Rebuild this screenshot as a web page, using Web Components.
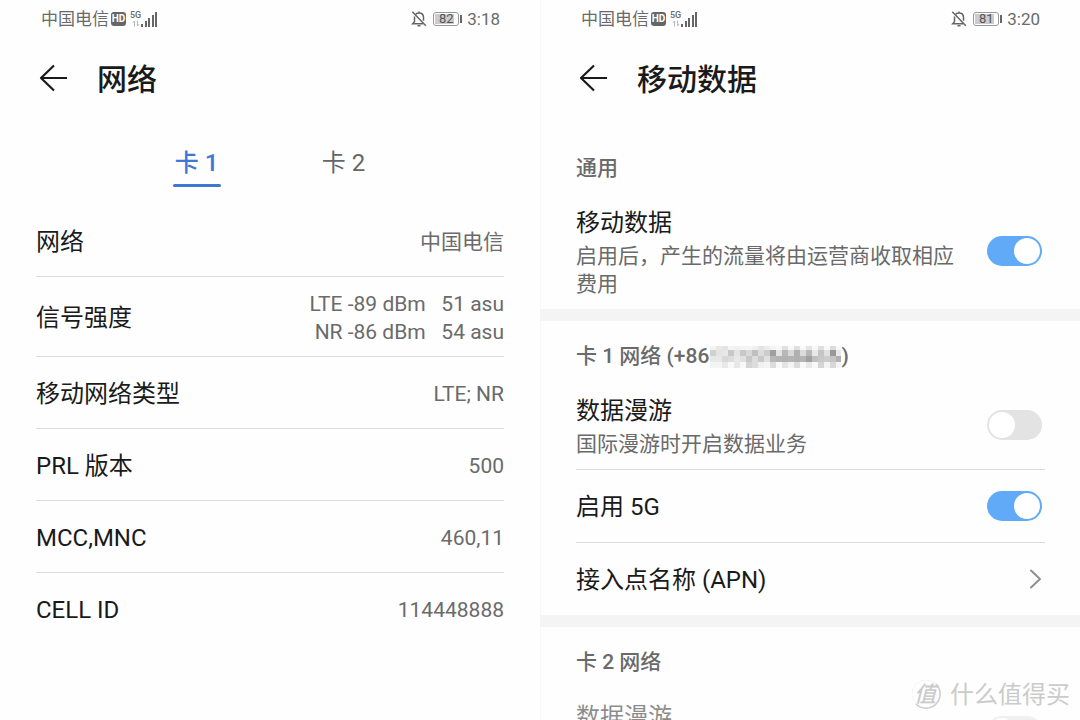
<!DOCTYPE html>
<html lang="zh-CN">
<head>
<meta charset="utf-8">
<title>网络设置</title>
<style>
  html, body { margin: 0; background: #fefefe; }
  body {
    font-family: Roboto, "Noto Sans CJK SC", sans-serif;
    color: #1a1a1a;
  }
</style>
</head>
<body>
<settings-board>
  <phone-screen>
    <status-bar slot="top" battery="82" time="3:18"></status-bar>
    <page-header slot="top">网络</page-header>
    <sim-tabs></sim-tabs>
    <info-list>
      <info-row label="网络">中国电信</info-row>
      <info-row label="信号强度" tall>LTE -89 dBm &nbsp; 51 asu<br>NR -86 dBm &nbsp; 54 asu</info-row>
      <info-row label="移动网络类型">LTE; NR</info-row>
      <info-row label="PRL 版本">500</info-row>
      <info-row label="MCC,MNC">460,11</info-row>
      <info-row label="CELL ID" last>114448888</info-row>
    </info-list>
  </phone-screen>
  <phone-screen class="second">
    <status-bar slot="top" battery="81" time="3:20"></status-bar>
    <page-header slot="top">移动数据</page-header>
    <setting-group class="first">
      <span slot="title">通用</span>
      <switch-row label="移动数据" note="启用后，产生的流量将由运营商收取相应费用" checked last></switch-row>
    </setting-group>
    <setting-group>
      <span slot="title">卡 1 网络 (+86<masked-number></masked-number>)</span>
      <switch-row label="数据漫游" note="国际漫游时开启数据业务"></switch-row>
      <switch-row label="启用 5G" checked></switch-row>
      <link-row>接入点名称 (APN)</link-row>
    </setting-group>
    <setting-group>
      <span slot="title">卡 2 网络</span>
      <switch-row label="数据漫游" note="国际漫游时开启数据业务" disabled></switch-row>
    </setting-group>
  </phone-screen>
  <brand-mark slot="mark"></brand-mark>
</settings-board>

<script>
const define = (name, render) => customElements.define(name, class extends HTMLElement {
  connectedCallback() {
    if (this.shadowRoot) return;
    this.attachShadow({ mode: 'open' }).innerHTML = render(this);
  }
});

define('settings-board', () => `
  <style>
    :host { display: block; position: relative; height: 100vh; overflow: hidden; }
    main { display: grid; grid-template-columns: 1fr 1fr; height: 100%; }
  </style>
  <main><slot></slot></main>
  <slot name="mark"></slot>`);

define('phone-screen', () => `
  <style>
    :host { display: block; min-width: 0; overflow-y: auto; scrollbar-width: none; }
    :host(.second) { box-shadow: inset 1px 0 #f7f7f7; }
  </style>
  <section><slot name="top"></slot><slot></slot></section>`);

define('status-bar', el => `
  <style>
    :host {
      display: flex; justify-content: space-between; align-items: center;
      box-sizing: border-box; height: 36px; padding: 1px 40px 0 41px;
      font-size: 17px; line-height: 20px; color: #6a6a6a;
    }
    div { display: flex; align-items: center; }
    svg { display: block; }
    .hd {
      width: 15px; height: 14px; margin-left: 2px; border-radius: 3px;
      background: #666; color: #fff; font-size: 10px; line-height: 14px; font-weight: 700; text-align: center;
    }
    .net { display: grid; justify-items: center; margin-left: 4px; font-size: 9px; line-height: 9px; font-weight: 500; }
    .bell { margin-right: 6px; }
    .level {
      box-sizing: border-box; width: 26px; height: 14px; padding: 1px;
      border: 1px solid #999; border-radius: 3px;
      font-size: 13px; line-height: 10px; text-align: center; color: #555;
      background: linear-gradient(#ccc, #ccc) 1px 1px / 19px 10px no-repeat;
    }
    .cap { width: 2px; height: 8px; margin: 0 5px 0 1px; background: #666; }
  </style>
  <div>
    <span>中国电信</span><span class="hd">HD</span>
    <span class="net">5G
      <svg width="8" height="7" viewBox="0 0 8 7" fill="none" stroke="#bbb"><path d="M2.5 6.5V1L.8 3M5.5.5V6L7.2 4"/></svg>
    </span>
    <svg width="17" height="16" viewBox="0 0 17 16" fill="#666"><path d="M0 13h2v3H0zM4 10h2v6H4zM7 7h2v9H7zM11 4h2v12h-2zM14 1h2v15h-2z"/></svg>
  </div>
  <div>
    <svg class="bell" width="16" height="16" viewBox="0 0 16 16" fill="none" stroke="#666" stroke-width="1.5">
      <path d="M4.8 3.1C5.6 2.3 6.7 1.9 8 1.9c2.900 0 4.500 2 4.500 4.700v3.200M3.500 5.500v5.200L1.700 12.800H12M1.300.8l13.500 14M8 .5v1.500M6.500 14.800h3"/>
    </svg>
    <span class="level">${el.getAttribute('battery')}</span><i class="cap"></i>
    <time>${el.getAttribute('time')}</time>
  </div>`);

define('page-header', () => `
  <style>
    :host { display: flex; align-items: center; height: 86px; padding: 0 36px; }
    button { display: block; padding: 0; margin: 0 27px 0 2px; border: 0; background: none; color: #1a1a1a; }
    svg { display: block; }
    h1 { margin: 0; padding-top: 2px; font-size: 30px; line-height: 40px; font-weight: 500; }
  </style>
  <button type="button" aria-label="返回">
    <svg width="32" height="30" viewBox="0 0 32 30" fill="none" stroke="currentColor" stroke-width="2.200" stroke-linejoin="round"><path d="M29 14H3M16 1.500L3 14l13 12.500"/></svg>
  </button>
  <h1><slot></slot></h1>`);

define('sim-tabs', () => `
  <style>
    :host { display: flex; justify-content: center; gap: 99px; margin: 25px 0 18px; }
    button {
      position: relative; min-width: 48px; padding: 0 0 8px; border: 0; background: none;
      font: inherit; font-size: 24px; line-height: 32px; color: #666; white-space: nowrap;
    }
    button[aria-selected=true] { color: #3f77d4; font-weight: 500; }
    button[aria-selected=true]::after {
      content: ""; position: absolute; left: 0; right: 0; bottom: 0; height: 3px; border-radius: 2px; background: #3f77d4;
    }
  </style>
  <button type="button" role="tab" aria-selected="true">卡 1</button>
  <button type="button" role="tab" aria-selected="false">卡 2</button>`);

define('info-list', () => `
  <style>:host { display: block; padding: 0 36px; }</style>
  <slot></slot>`);

define('info-row', el => `
  <style>
    :host {
      display: flex; justify-content: space-between; align-items: center;
      box-sizing: border-box; min-height: 72px; padding-top: 2px; border-bottom: 1px solid #dcdcdc;
    }
    :host([tall]) { min-height: 80px; }
    :host([last]) { border-bottom-color: transparent; }
    .label { font-size: 24px; line-height: 32px; }
    .value { font-size: 21px; line-height: 28px; color: #6a6a6a; text-align: right; }
  </style>
  <span class="label">${el.getAttribute('label')}</span>
  <span class="value"><slot></slot></span>`);

define('setting-group', () => `
  <style>
    :host { display: block; border-top: 12px solid #f4f4f4; }
    :host(.first) { border-top-color: transparent; margin-top: -1px; }
    h2 { display: flex; margin: 0; padding: 21px 36px 13px; font-size: 21px; line-height: 28px; font-weight: 500; color: #6a6a6a; }
    .rows { padding: 0 35px 0 36px; }
  </style>
  <h2><slot name="title"></slot></h2>
  <div class="rows"><slot></slot></div>`);

define('masked-number', () => {
  const rows = [
    [0, 4, 'f4 e8 e4 f4 f0 f4 f4 f0 e4 ec f4 f8 e0 f8 e0 f8 e4 f8 e0 f8 dc f8'],
    [4, 6, 'd0 e4 e8 c8 e4 c8 d8 c0 dc cc a0 e4 b8 d8 b0 dc b8 e8 c4 e0 98 e8'],
    [10, 6, 'e8 e8 d8 dc e8 e0 c8 dc c8 e0 b8 b4 b0 b4 b0 b4 a0 c0 c8 cc c4 b0'],
    [16, 6, 'f4 f4 e8 f8 e8 f8 d4 dc f0 f4 dc f8 e4 f4 dc f8 e8 f8 d4 f4 d8 f4']
  ];
  const cells = rows.map(([y, h, tones]) => tones.split(' ')
    .map((t, i) => `<rect x="${i * 6}" y="${y}" width="6" height="${h}" fill="#${t}${t}${t}"/>`).join('')).join('');
  return `
  <style>:host { display: inline-block; vertical-align: middle; margin-left: 1px; } svg { display: block; }</style>
  <svg width="131" height="22" viewBox="0 0 131 22" shape-rendering="crispEdges" role="img" aria-label="号码已隐藏">${cells}</svg>`;
});

define('switch-row', el => {
  const has = name => el.hasAttribute(name) ? name : '';
  const note = el.getAttribute('note');
  return `
  <style>
    :host { display: block; border-bottom: 1px solid #dcdcdc; }
    :host([last]) { border-bottom: 0; }
    label { display: flex; align-items: center; justify-content: space-between; gap: 20px; min-height: 72px; }
    label.noted { padding: 12px 0 11px; min-height: 0; }
    .text { display: grid; gap: 3px; padding-top: 2px; }
    .noted .text { padding-top: 0; }
    .name { font-size: 24px; line-height: 32px; }
    .note { max-width: 384px; font-size: 21px; line-height: 28px; color: #6a6a6a; }
    :host([disabled]) .text { opacity: .5; }
    input {
      appearance: none; flex: none; box-sizing: border-box; width: 55px; height: 30px; margin: 0 3px 0 0; padding: 2px;
      display: flex; border-radius: 15px; background: #e3e3e3;
    }
    .noted input { margin-bottom: 4px; }
    input::before { content: ""; width: 26px; height: 26px; border-radius: 50%; background: #fff; }
    input:checked { background: #60aaf8; justify-content: flex-end; }
    input:disabled { background: #f0f0f0; }
  </style>
  <label class="${note ? 'noted' : ''}">
    <span class="text"><span class="name">${el.getAttribute('label')}</span>${note ? `<span class="note">${note}</span>` : ''}</span>
    <input type="checkbox" role="switch" ${has('checked')} ${has('disabled')}>
  </label>`;
});

define('link-row', () => `
  <style>
    :host { display: block; }
    a {
      display: flex; align-items: center; justify-content: space-between; min-height: 72px; padding-right: 3px;
      font-size: 24px; line-height: 32px; color: inherit; text-decoration: none;
    }
    span { padding-top: 2px; }
    svg { display: block; }
  </style>
  <a href="#apn"><span><slot></slot></span>
    <svg width="13" height="20" viewBox="0 0 13 20" fill="none" stroke="#909090" stroke-width="2" stroke-linecap="round" stroke-linejoin="round"><path d="M2 1.500L11 10l-9 8.500"/></svg>
  </a>`);

define('brand-mark', () => `
  <style>
    :host {
      position: absolute; right: 10px; bottom: 9px; display: flex; align-items: center; gap: 8px;
      font-size: 24px; line-height: 32px; color: #cbcbcb;
    }
    .seal {
      display: grid; place-items: center; width: 30px; height: 30px;
      font-size: 22px; line-height: 30px; font-weight: 500; font-style: italic;
    }
    .seal > * { grid-area: 1 / 1; }
    b { font-weight: 500; padding-right: 4px; }
  </style>
  <span class="seal"><svg width="30" height="30" viewBox="0 0 30 30" fill="none" stroke="#cbcbcb"><path d="M24 4A14 14 0 0 1 4 24" stroke-width="1.500"/><path d="M4 24A14 14 0 0 1 24 4" stroke="#f4f4f4"/></svg><b>值</b></span>
  <span>什么值得买</span>`);
</script>
</body>
</html>
